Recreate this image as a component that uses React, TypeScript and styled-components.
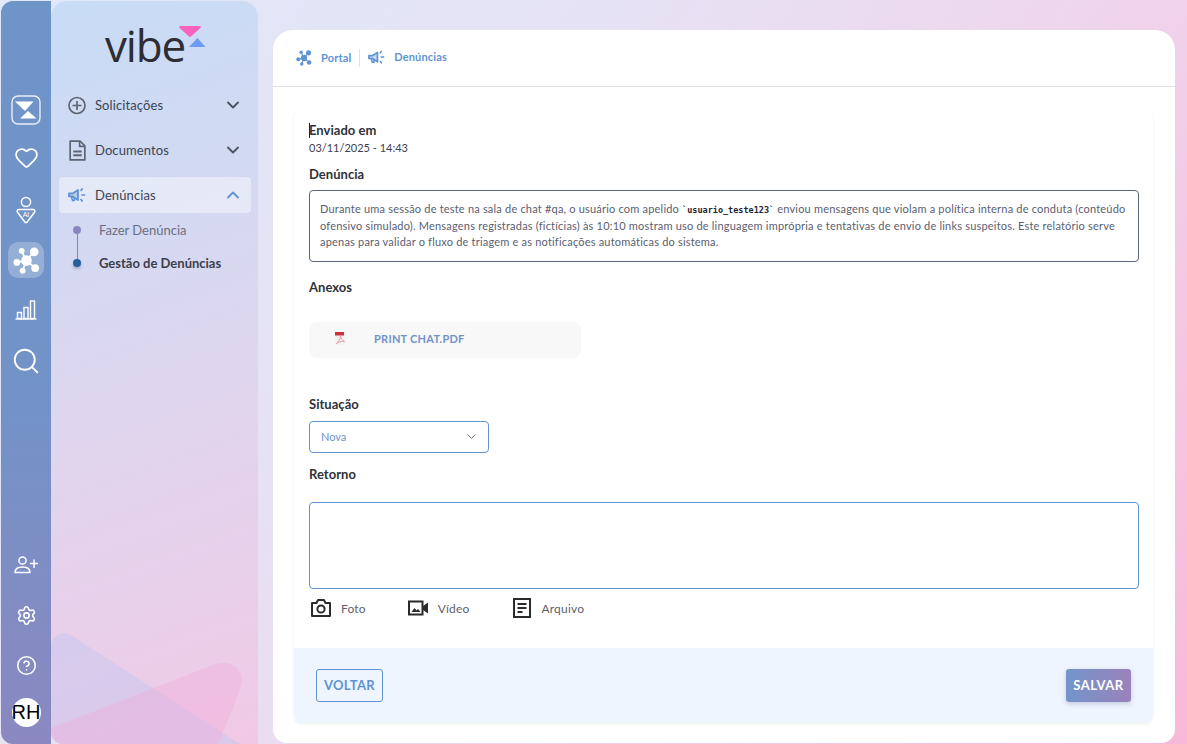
import React from "react";
import styled, { createGlobalStyle } from "styled-components";
import { Heart, Search, Settings, CircleHelp, ChevronDown, ChevronUp } from "lucide-react";

const FONT = `"Lato", "Noto Sans", "Liberation Sans", sans-serif`;

const Global = createGlobalStyle`
  html, body { margin: 0; padding: 0; height: 100%; }
  body { font-family: ${FONT}; overflow: hidden; }
  * { box-sizing: border-box; }
`;

const Page = styled.div`
  width: 1187px;
  height: 744px;
  padding: 1px 0 0 1px;
  display: flex;
  background: linear-gradient(128deg, #dfe9f9 0%, #e6e2f5 35%, #efd6ec 62%, #f9b8da 100%);
  overflow: hidden;
`;

const Rail = styled.nav`
  width: 50px;
  flex: none;
  display: flex;
  flex-direction: column;
  justify-content: space-between;
  padding: 84px 0 10px;
  background: linear-gradient(180deg, #6f94c8 0%, #7393c8 55%, #8b88c0 100%);
  border-radius: 12px 0 0 12px;
`;

const RailGroup = styled.div`
  display: flex;
  flex-direction: column;
  align-items: center;
`;

const RailSlot = styled.div<{ $h?: number }>`
  width: 36px;
  height: ${(p) => p.$h ?? 50}px;
  display: flex;
  align-items: center;
  justify-content: center;
  color: #fff;
`;

const ActiveTile = styled.div`
  width: 36px;
  height: 36px;
  flex: none;
  border-radius: 10px;
  background: rgba(255, 255, 255, 0.25);
  display: flex;
  align-items: center;
  justify-content: center;
`;

const Avatar = styled.div`
  width: 29px;
  height: 29px;
  border-radius: 50%;
  background: #fff;
  color: #000;
  font: 20px/29px "Liberation Sans", Arial, sans-serif;
  text-align: center;
  overflow: hidden;
  white-space: nowrap;
  display: flex;
  justify-content: center;
`;

const Sidebar = styled.aside`
  width: 207px;
  flex: none;
  position: relative;
  overflow: hidden;
  border-radius: 16px 16px 0 12px;
  background: linear-gradient(160deg, #c8dcf6 0%, #d3d9f2 30%, #e0d5ee 55%, #e9cfea 80%, #f1c9e5 100%);
  padding: 0 7px 0 8px;
`;

const Decor = styled.svg`
  position: absolute;
  left: 0;
  bottom: 0;
  pointer-events: none;
`;

const LogoRow = styled.div`
  height: 86px;
  display: flex;
  justify-content: center;
  align-items: flex-start;
  padding: 18px 0 0 2px;
  position: relative;
`;

const LogoText = styled.span`
  font-family: "Open Sans", sans-serif;
  font-weight: 400;
  font-size: 44px;
  line-height: 52px;
  color: #2d2d33;
  letter-spacing: -1.2px;
`;

const LogoMark = styled.svg`
  margin: 7px 0 0 -6px;
`;

const Menu = styled.div`
  position: relative;
  display: flex;
  flex-direction: column;
  gap: 9px;
`;

const MenuItem = styled.div<{ $active?: boolean }>`
  height: 36px;
  display: flex;
  align-items: center;
  padding: 0 8px 0 9px;
  border-radius: 4px;
  background: ${(p) => (p.$active ? "rgba(255,255,255,0.42)" : "transparent")};
  font-size: 13px;
  letter-spacing: 0.1px;
  color: #3c4454;
`;

const MenuIcon = styled.span`
  width: 18px;
  height: 20px;
  margin-right: 9px;
  display: flex;
  align-items: center;
  justify-content: center;
  color: #5e6472;
`;

const MenuLabel = styled.span`
  flex: 1;
`;

const SubMenu = styled.div`
  display: flex;
  flex-direction: column;
  margin-top: -10px;
  padding-top: 1px;
`;

const SubItem = styled.div<{ $current?: boolean }>`
  height: 33px;
  display: flex;
  align-items: center;
  font-size: 13px;
  padding-left: 40px;
  position: relative;
  color: ${(p) => (p.$current ? "#3a3f4b" : "#6b6f80")};
  font-weight: ${(p) => (p.$current ? 700 : 400)};
`;

const Dot = styled.span<{ $current?: boolean }>`
  position: absolute;
  left: 14px;
  top: 50%;
  width: 8px;
  height: 8px;
  margin-top: -4px;
  border-radius: 50%;
  background: ${(p) => (p.$current ? "#22609c" : "#8c86c0")};
  box-shadow: ${(p) => (p.$current ? "0 2px 3px rgba(40,60,110,.3)" : "none")};
`;

const Connector = styled.span`
  position: absolute;
  left: 18px;
  top: 50%;
  height: 33px;
  width: 1px;
  background: #7f84bd;
`;

const Main = styled.main`
  flex: 1;
  min-width: 0;
  padding: 29px 12px 1px 15px;
  display: flex;
`;

const Card = styled.div`
  flex: 1;
  background: #fff;
  border-radius: 20px 20px 14px 14px;
  display: flex;
  flex-direction: column;
`;

const Breadcrumb = styled.header`
  height: 57px;
  flex: none;
  border-bottom: 1px solid #e2e2e6;
  display: flex;
  align-items: center;
  padding: 0 0 0 23px;
  font-size: 11px;
  font-weight: 700;
  letter-spacing: 0.15px;
  color: #5f93d3;
`;

const Crumb = styled.div`
  display: flex;
  align-items: center;
  gap: 9px;
`;

const CrumbText = styled.span`
  padding-bottom: 2px;
`;

const CrumbDivider = styled.span`
  width: 1px;
  height: 18px;
  background: #e2e2e6;
  margin: 0 8px;
`;

const Panel = styled.section`
  flex: 1;
  margin: 23px 22px 20px 21px;
  border-radius: 8px;
  box-shadow: 0 1px 3px rgba(40, 50, 90, 0.08);
  display: flex;
  flex-direction: column;
  overflow: hidden;
`;

const Form = styled.div`
  flex: 1;
  padding: 11px 14px 0 15px;
  display: flex;
  flex-direction: column;
`;

const Label = styled.div<{ $mt?: number }>`
  font-size: 13px;
  line-height: 18px;
  font-weight: 700;
  letter-spacing: 0.03px;
  color: #2f323a;
  margin-top: ${(p) => p.$mt ?? 0}px;
`;

const Caret = styled.span`
  display: inline-block;
  width: 1px;
  height: 15px;
  margin-right: -1px;
  vertical-align: -3px;
  background: #222;
`;

const DateText = styled.div`
  margin-top: 1px;
  font-size: 11px;
  line-height: 15px;
  color: #3c4150;
`;

const ReadBox = styled.div`
  margin-top: 7px;
  height: 72px;
  border: 1px solid #5b6478;
  border-radius: 4px;
  padding: 10px 10px;
  font-size: 11px;
  line-height: 16px;
  letter-spacing: 0.2px;
  color: #5a6070;
  white-space: nowrap;
`;

const Code = styled.code`
  font-family: "DejaVu Sans Mono", "Liberation Mono", monospace;
  font-size: 8.5px;
  font-weight: 700;
  letter-spacing: 0;
  color: #1f2430;
`;

const Attachment = styled.div`
  margin-top: 26px;
  width: 272px;
  height: 36px;
  border-radius: 8px;
  background: #f8f8f9;
  display: flex;
  align-items: center;
  padding: 0 0 4px 25px;
  gap: 27px;
  font-size: 11px;
  font-weight: 700;
  letter-spacing: 0.25px;
  color: #7193c8;
`;

const SelectBox = styled.div`
  margin-top: 8px;
  width: 180px;
  height: 32px;
  border: 1px solid #5f93d3;
  border-radius: 4px;
  display: flex;
  align-items: center;
  justify-content: space-between;
  padding: 0 9px 2px 11px;
  font-size: 11px;
  color: #6f94c8;
`;

const ReturnArea = styled.textarea`
  margin-top: 19px;
  height: 87px;
  width: 100%;
  display: block;
  border: 1px solid #5f93d3;
  border-radius: 4px;
  outline: none;
  resize: none;
  background: #fff;
`;

const Actions = styled.div`
  margin-top: 7px;
  height: 24px;
  display: flex;
  align-items: center;
  gap: 42px;
  padding-left: 2px;
`;

const ActionItem = styled.div<{ $mr?: number }>`
  display: flex;
  align-items: center;
  gap: 10px;
  margin-right: ${(p) => p.$mr ?? 0}px;
  font-size: 12px;
  letter-spacing: 0.2px;
  color: #5f6068;
`;

const Footer = styled.footer`
  flex: none;
  height: 75px;
  background: #eef5fe;
  display: flex;
  align-items: center;
  justify-content: space-between;
  padding: 0 22px;
`;

const OutlineButton = styled.button`
  width: 67px;
  height: 33px;
  border: 1px solid #5f93d3;
  border-radius: 3px;
  background: transparent;
  color: #5f93d3;
  font: 700 13px ${FONT};
  letter-spacing: 0.3px;
  padding: 0 0 1px;
`;

const SolidButton = styled.button`
  width: 65px;
  height: 33px;
  border: none;
  border-radius: 3px;
  background: linear-gradient(90deg, #7295cb, #9b82bb);
  color: #fff;
  font: 700 13px ${FONT};
  letter-spacing: 0.5px;
  padding: 0 0 1px;
  box-shadow: 0 2px 5px rgba(70, 80, 140, 0.25);
`;

const NetworkIcon = ({ size, color }: { size: number; color: string }) => (
  <svg width={size} height={size} viewBox="0 0 28 28" fill={color}>
    <g stroke={color} strokeWidth="1.8">
      <line x1="14" y1="14" x2="9" y2="4.5" />
      <line x1="14" y1="14" x2="22" y2="4.5" />
      <line x1="14" y1="14" x2="4" y2="16" />
      <line x1="14" y1="14" x2="23" y2="22" />
      <line x1="14" y1="14" x2="10" y2="24" />
    </g>
    <circle cx="14" cy="14" r="5.5" />
    <circle cx="9" cy="4" r="3" />
    <circle cx="22" cy="5" r="4.5" />
    <circle cx="4" cy="16" r="3.5" />
    <circle cx="23" cy="22" r="4" />
    <circle cx="10" cy="24.5" r="3" />
  </svg>
);

const MegaphoneIcon = ({ width, color }: { width: number; color: string }) => (
  <svg width={width} height={(width * 16) / 18} viewBox="0 0 18 16" fill="none" stroke={color} strokeLinecap="round" strokeLinejoin="round">
    <path d="M1 6h3.5L10 2.5v10L4.5 9H1z" strokeWidth="1.8" fill={color} fillOpacity=".35" />
    <path d="M3.5 9.5l1 3.5H6.5L6 10" strokeWidth="1.5" />
    <path d="M13 3l1.2-1.6M14 7.5h2.6M13 12l1.2 1.6" strokeWidth="1.6" />
  </svg>
);

const HourglassIcon = () => (
  <svg width="30" height="30" viewBox="0 0 30 30">
    <rect x="1" y="1" width="28" height="28" rx="6" fill="none" stroke="rgba(255,255,255,.85)" strokeWidth="1.4" />
    <path d="M4 6.5h18.5l-8.5 9.5z" fill="#fff" />
    <path d="M17 16l8.5 7.5H9z" fill="#fff" />
  </svg>
);

const AiUserIcon = () => (
  <svg width="22" height="30" viewBox="0 0 22 30" fill="none" stroke="#fff" strokeWidth="1.5">
    <circle cx="11" cy="6" r="4.6" />
    <path d="M4 13.5h14c1.6 0 2.4 1.6 1.5 2.8L12.2 26c-.6.8-1.8.8-2.4 0L2.5 16.3c-.9-1.2-.1-2.8 1.5-2.8z" strokeLinejoin="round" />
    <text x="11" y="20.5" fontSize="7" fontFamily="Liberation Sans, sans-serif" textAnchor="middle" fill="#fff" stroke="none">AI</text>
  </svg>
);

const ChartIcon = () => (
  <svg width="22" height="20" viewBox="0 0 22 20" fill="none" stroke="#fff" strokeWidth="1.4">
    <path d="M0.5 19h21" />
    <rect x="2.5" y="12.5" width="4" height="6" />
    <rect x="9" y="7.5" width="4" height="11" />
    <rect x="15.5" y="1" width="4" height="17.5" />
  </svg>
);

const UserAddIcon = () => (
  <svg width="24" height="18" viewBox="0 0 24 18" fill="none" stroke="#fff" strokeWidth="1.5" strokeLinecap="round" strokeLinejoin="round">
    <circle cx="8.5" cy="4.5" r="3.6" />
    <path d="M1 16.5c0-3.5 3-5.5 7.5-5.5s7.5 2 7.5 5.5z" />
    <path d="M20 4v7.5M16.5 7.5h7" />
  </svg>
);

const PlusCircleIcon = () => (
  <svg width="19" height="19" viewBox="0 0 18 18" fill="none" stroke="#5e6472" strokeWidth="1.7">
    <circle cx="9" cy="9" r="8" />
    <path d="M9 4.5v9M4.5 9h9" />
  </svg>
);

const DocIcon = () => (
  <svg width="17" height="21" viewBox="0 0 16 20" fill="none" stroke="#5e6472" strokeWidth="1.6" strokeLinejoin="round">
    <path d="M1 1h9.5L15 5.5V19H1z" />
    <path d="M10 1v5h5" />
    <path d="M4 11h8M4 14.5h8" strokeWidth="1.8" />
  </svg>
);

const PdfIcon = () => (
  <svg width="13" height="13" viewBox="0 0 13 13">
    <rect x="1" y="0" width="11" height="13" fill="#f4f2f2" />
    <rect x="1" y="0" width="9" height="3.5" fill="#c8323c" />
    <path d="M6.5 4c0 3-2 5.5-4 7.5 2-1.5 5-2.5 8-2-2-1-3.5-3-4-5.5z" fill="none" stroke="#ec8a8f" strokeWidth=".8" />
  </svg>
);

const CameraIcon = () => (
  <svg width="20" height="18" viewBox="0 0 20 18" fill="none" stroke="#2b2b2e" strokeWidth="2">
    <path d="M1 4h4.5L7 1h6l1.5 3H19v13H1z" strokeLinejoin="round" />
    <circle cx="10" cy="10" r="3.6" />
  </svg>
);

const VideoIcon = () => (
  <svg width="20" height="16" viewBox="0 0 20 16">
    <rect x="1" y="1.5" width="13.5" height="13" fill="none" stroke="#2b2b2e" strokeWidth="2" />
    <path d="M3.5 12l3-4 2 2.5 1.5-1.5 2.5 3z" fill="#2b2b2e" />
    <path d="M15 6l5-3.5v11L15 10z" fill="#2b2b2e" />
  </svg>
);

const FileIcon = () => (
  <svg width="18" height="20" viewBox="0 0 18 20" fill="none" stroke="#2b2b2e" strokeWidth="2">
    <rect x="1" y="1" width="16" height="18" />
    <path d="M4.5 6h9M4.5 10h9M4.5 14h5" />
  </svg>
);

export default function App() {
  return (
    <Page>
      <Global />
      <Rail>
        <RailGroup>
          <RailSlot><HourglassIcon /></RailSlot>
          <RailSlot $h={45}><Heart size={25} strokeWidth={1.7} /></RailSlot>
          <RailSlot $h={62}><AiUserIcon /></RailSlot>
          <RailSlot $h={36}><ActiveTile><NetworkIcon size={27} color="#fff" /></ActiveTile></RailSlot>
          <RailSlot $h={64}><ChartIcon /></RailSlot>
          <RailSlot $h={38}><Search size={30} strokeWidth={1.5} /></RailSlot>
        </RailGroup>
        <RailGroup>
          <RailSlot><UserAddIcon /></RailSlot>
          <RailSlot><Settings size={21} strokeWidth={1.8} /></RailSlot>
          <RailSlot><CircleHelp size={21} strokeWidth={1.8} /></RailSlot>
          <RailSlot $h={44}><Avatar>RH</Avatar></RailSlot>
        </RailGroup>
      </Rail>
      <Sidebar>
        <Decor width="207" height="125" viewBox="0 0 207 125">
          <path d="M0 24C4 16 10 12 17 15C22 17 26 20 32 24L189 125H0z" fill="#c5c8f0" fillOpacity=".5" />
          <path d="M0 109L162 46C178 40 194 48 190 66C186 82 174 108 167 125H0z" fill="#f0b0dc" fillOpacity=".45" />
        </Decor>
        <LogoRow>
          <LogoText>vibe</LogoText>
          <LogoMark width="28" height="22" viewBox="0 0 28 22">
            <path d="M1.5 0h19c1.2 0 1.7 1.2.9 2L12 10.5c-.6.6-1.5.6-2 0L.6 2C-.2 1.2.3 0 1.5 0z" fill="#f763bd" />
            <path d="M18.5 12l8 9H10z" fill="#6c9af5" />
          </LogoMark>
        </LogoRow>
        <Menu>
          <MenuItem>
            <MenuIcon><PlusCircleIcon /></MenuIcon>
            <MenuLabel>Solicitações</MenuLabel>
            <ChevronDown size={20} strokeWidth={2.2} color="#4b5260" />
          </MenuItem>
          <MenuItem>
            <MenuIcon><DocIcon /></MenuIcon>
            <MenuLabel>Documentos</MenuLabel>
            <ChevronDown size={20} strokeWidth={2.2} color="#4b5260" />
          </MenuItem>
          <MenuItem $active>
            <MenuIcon><MegaphoneIcon width={19} color="#5f93d3" /></MenuIcon>
            <MenuLabel>Denúncias</MenuLabel>
            <ChevronUp size={20} strokeWidth={2.2} color="#5f93d3" />
          </MenuItem>
          <SubMenu>
            <SubItem>
              <Connector />
              <Dot />
              Fazer Denúncia
            </SubItem>
            <SubItem $current>
              <Dot $current />
              Gestão de Denúncias
            </SubItem>
          </SubMenu>
        </Menu>
      </Sidebar>
      <Main>
        <Card>
          <Breadcrumb>
            <Crumb><NetworkIcon size={16} color="#5f93d3" /><CrumbText>Portal</CrumbText></Crumb>
            <CrumbDivider />
            <Crumb><MegaphoneIcon width={17} color="#5f93d3" /><CrumbText>Denúncias</CrumbText></Crumb>
          </Breadcrumb>
          <Panel>
            <Form>
              <Label><Caret />Enviado em</Label>
              <DateText>03/11/2025 - 14:43</DateText>
              <Label $mt={10}>Denúncia</Label>
              <ReadBox>
                Durante uma sessão de teste na sala de chat #qa, o usuário com apelido <Code>`usuario_teste123`</Code> enviou mensagens que violam a política interna de conduta (conteúdo
                <br />
                ofensivo simulado). Mensagens registradas (fictícias) às 10:10 mostram uso de linguagem imprópria e tentativas de envio de links suspeitos. Este relatório serve
                <br />
                apenas para validar o fluxo de triagem e as notificações automáticas do sistema.
              </ReadBox>
              <Label $mt={16}>Anexos</Label>
              <Attachment><PdfIcon /><span>PRINT CHAT.PDF</span></Attachment>
              <Label $mt={37}>Situação</Label>
              <SelectBox><span>Nova</span><ChevronDown size={15} strokeWidth={1.6} color="#6b7280" /></SelectBox>
              <Label $mt={12}>Retorno</Label>
              <ReturnArea />
              <Actions>
                <ActionItem><CameraIcon />Foto</ActionItem>
                <ActionItem $mr={2}><VideoIcon />Vídeo</ActionItem>
                <ActionItem><FileIcon />Arquivo</ActionItem>
              </Actions>
            </Form>
            <Footer>
              <OutlineButton>VOLTAR</OutlineButton>
              <SolidButton>SALVAR</SolidButton>
            </Footer>
          </Panel>
        </Card>
      </Main>
    </Page>
  );
}
